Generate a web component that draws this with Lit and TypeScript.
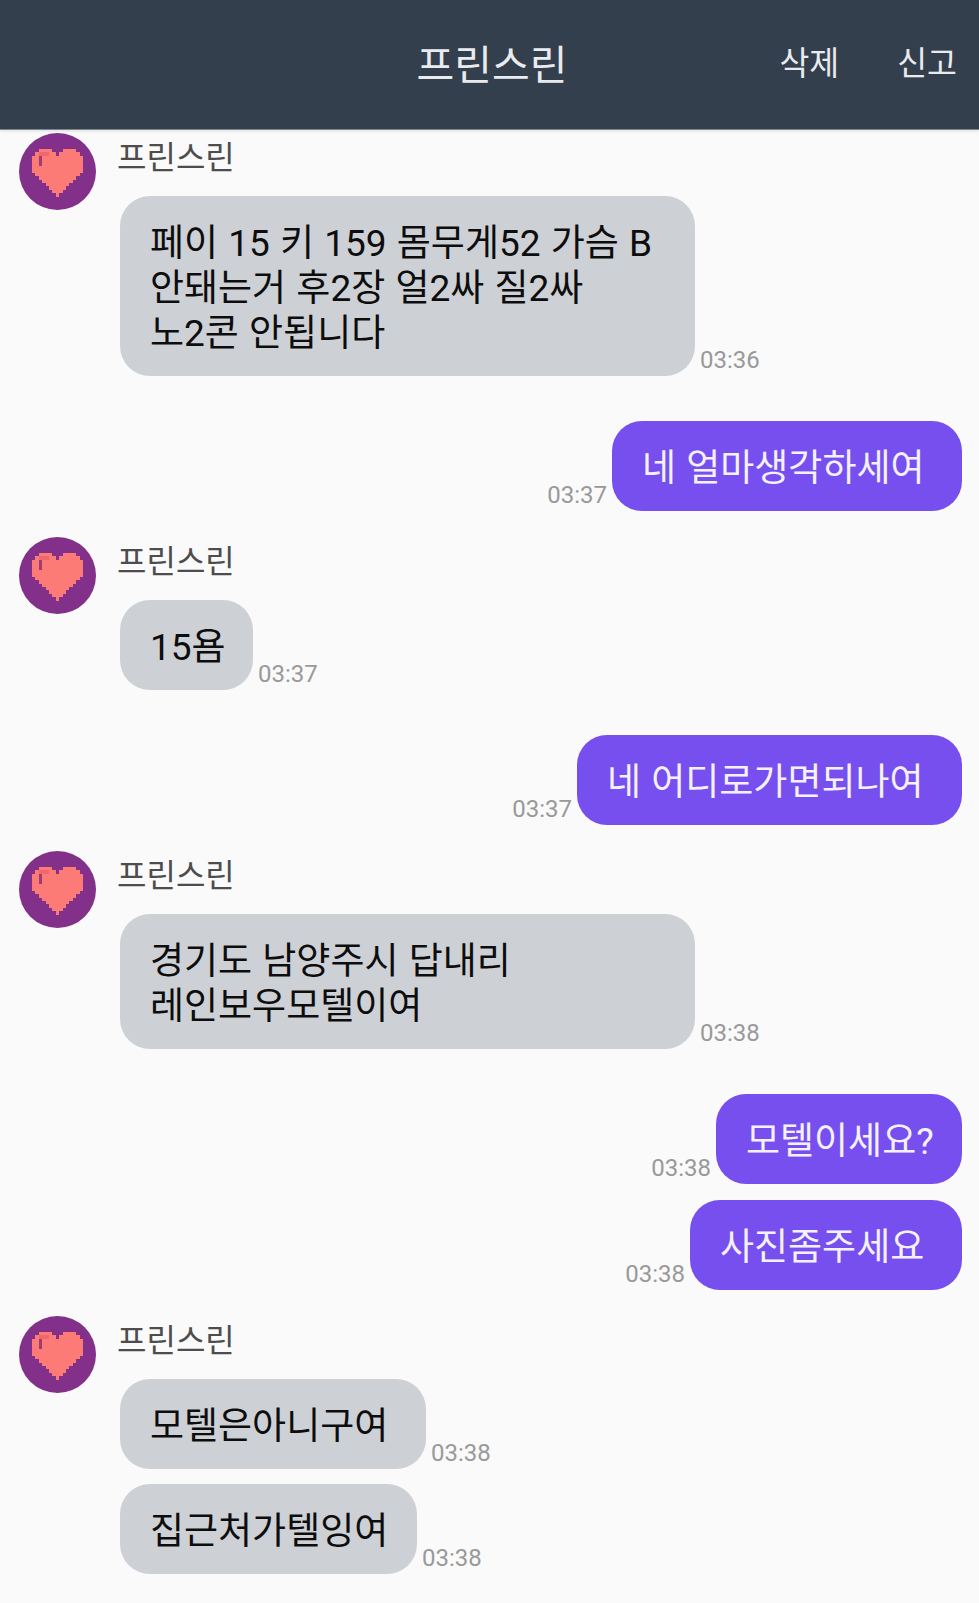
import { LitElement, html, css, svg } from "lit";
import { customElement } from "lit/decorators.js";

type Msg = { text: string; time: string; w: number };
type Group = { from: "in" | "out"; msgs: Msg[] };

const chat: Group[] = [
  { from: "in", msgs: [{ text: "페이 15 키 159 몸무게52 가슴 B\n안돼는거 후2장 얼2싸 질2싸\n노2콘 안됩니다", time: "03:36", w: 575 }] },
  { from: "out", msgs: [{ text: "네 얼마생각하세여", time: "03:37", w: 350 }] },
  { from: "in", msgs: [{ text: "15욤", time: "03:37", w: 133 }] },
  { from: "out", msgs: [{ text: "네 어디로가면되나여", time: "03:37", w: 385 }] },
  { from: "in", msgs: [{ text: "경기도 남양주시 답내리\n레인보우모텔이여", time: "03:38", w: 575 }] },
  { from: "out", msgs: [{ text: "모텔이세요?", time: "03:38", w: 246 }, { text: "사진좀주세요", time: "03:38", w: 272 }] },
  { from: "in", msgs: [{ text: "모텔은아니구여", time: "03:38", w: 306 }, { text: "집근처가텔잉여", time: "03:38", w: 297 }] },
];

// pixel heart, one [start, end] per row
const heartRows: number[][][] = [
  [[2, 5], [9, 12]],
  [[1, 6], [8, 13]],
  [[0, 14]],
  [[0, 14]],
  [[0, 14]],
  [[0, 14]],
  [[0, 14]],
  [[1, 13]],
  [[2, 12]],
  [[3, 11]],
  [[4, 10]],
  [[5, 9]],
  [[6, 8]],
  [[7, 7]],
];

@customElement("app-root")
export class AppRoot extends LitElement {
  static styles = css`
    :host {
      display: block;
      width: 979px;
      height: 1603px;
      overflow: hidden;
      background: #fafafa;
      font-family: Roboto, "Noto Sans CJK KR", sans-serif;
    }
    .top {
      display: grid;
      grid-template-columns: minmax(0, 1fr) auto minmax(0, 1fr);
      align-items: center;
      height: 129px;
      padding: 0 22px 0 27px;
      background: #343f4e;
      border-bottom: 1px solid #7d8792;
      color: #e9ebee;
      box-shadow: 0 1px 3px rgba(0, 0, 0, 0.12);
    }
    .title {
      grid-column: 2;
      font-size: 41px;
      line-height: 1;
      margin-top: 4px;
    }
    .actions {
      display: flex;
      justify-content: flex-end;
      gap: 58px;
      font-size: 32.5px;
      line-height: 1;
      white-space: nowrap;
    }
    .chat {
      display: flex;
      flex-direction: column;
      padding: 3px 17px 0 19px;
    }
    .group.in {
      display: flex;
      gap: 21px;
      margin-bottom: 26px;
    }
    .group.out {
      display: flex;
      flex-direction: column;
      gap: 16px;
      margin-bottom: 26px;
    }
    .group.in + .group.out {
      margin-top: 19px;
    }
    .avatar {
      width: 77px;
      height: 77px;
      flex: none;
    }
    .body {
      display: flex;
      flex-direction: column;
      gap: 15px;
    }
    .name {
      font-size: 32px;
      line-height: 50px;
      height: 46px;
      margin-bottom: 2px;
      color: #4d4d4d;
    }
    .row {
      display: flex;
      align-items: flex-end;
      gap: 5px;
      margin-left: 3px;
    }
    .group.out .row {
      flex-direction: row-reverse;
      margin-left: 0;
    }
    .bubble {
      box-sizing: border-box;
      padding: 25px 0 20px 30px;
      border-radius: 30px;
      font-size: 37px;
      line-height: 45px;
      word-spacing: 1px;
      white-space: pre-line;
      background: #cdd0d5;
      color: #0d0d0d;
    }
    .group.out .bubble {
      background: #774fef;
      color: #f4f1fe;
    }
    .time {
      flex: none;
      font-size: 24px;
      line-height: 28px;
      margin-bottom: 2px;
      color: #999;
    }
  `;

  renderAvatar() {
    const p = 3.4;
    return html`<svg class="avatar" viewBox="0 0 77 77" shape-rendering="crispEdges">
      <circle cx="38.5" cy="38.5" r="38.5" fill="#83308b" shape-rendering="auto"></circle>
      ${heartRows.map((spans, r) =>
        spans.map(
          ([a, b]) =>
            svg`<rect x=${13 + a * p} y=${16 + r * p} width=${(b - a + 1) * p} height=${p} fill="#fd7b77"></rect>`,
        ),
      )}
      <rect x=${13 + 2 * p} y=${16 + 2 * p} width=${p} height=${3 * p} fill="#9c3f6f"></rect>
      <rect x=${13 + 2 * p} y=${16 + p} width=${3 * p} height=${p} fill="#f0686f"></rect>
    </svg>`;
  }

  renderRow(m: Msg) {
    return html`<div class="row">
      <div class="bubble" style="width:${m.w}px">${m.text}</div>
      <div class="time">${m.time}</div>
    </div>`;
  }

  render() {
    return html`
      <div class="top">
        <div class="title">프린스린</div>
        <div class="actions"><span>삭제</span><span>신고</span></div>
      </div>
      <div class="chat">
        ${chat.map((g) =>
          g.from === "in"
            ? html`<div class="group in">
                ${this.renderAvatar()}
                <div class="body">
                  <div class="name">프린스린</div>
                  ${g.msgs.map((m) => this.renderRow(m))}
                </div>
              </div>`
            : html`<div class="group out">${g.msgs.map((m) => this.renderRow(m))}</div>`,
        )}
      </div>
    `;
  }
}
